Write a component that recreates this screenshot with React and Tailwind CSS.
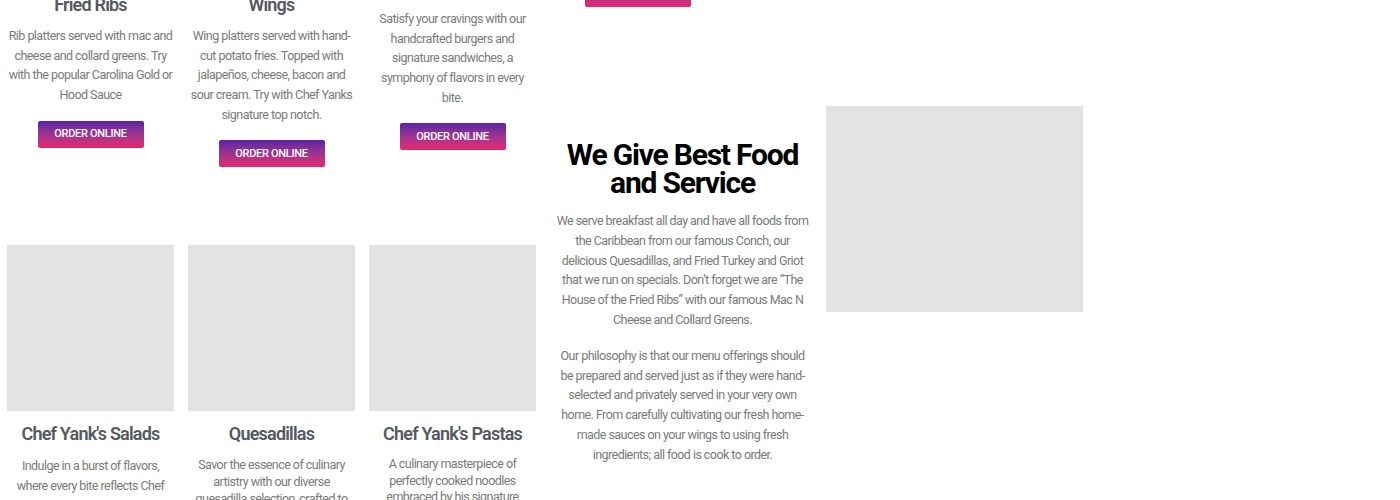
import React from 'react';

const topItems = [
  {
    title: 'Fried Ribs',
    desc: 'Rib platters served with mac and cheese and collard greens. Try with the popular Carolina Gold or Hood Sauce',
    offset: 'mt-[34px]',
    pad: '',
  },
  {
    title: 'Wings',
    desc: 'Wing platters served with hand-cut potato fries. Topped with jalapeños, cheese, bacon and sour cream. Try with Chef Yanks signature top notch.',
    offset: 'mt-[34px]',
    pad: '',
  },
  {
    title: 'Burgers',
    desc: 'Satisfy your cravings with our handcrafted burgers and signature sandwiches, a symphony of flavors in every bite.',
    offset: 'mt-[17px]',
    pad: 'px-[8px]',
  },
];

const bottomItems = [
  {
    title: "Chef Yank's Salads",
    desc: "Indulge in a burst of flavors, where every bite reflects Chef Yank's passion for fresh ingredients.",
    leading: 'leading-[20px]',
  },
  {
    title: 'Quesadillas',
    desc: 'Savor the essence of culinary artistry with our diverse quesadilla selection, crafted to perfection.',
    leading: 'leading-[17px]',
  },
  {
    title: "Chef Yank's Pastas",
    desc: 'A culinary masterpiece of perfectly cooked noodles embraced by his signature sauces.',
    leading: 'leading-[16.5px]',
  },
];

function OrderButton() {
  return (
    <a
      href="#"
      className="inline-flex items-center justify-center w-[106px] h-[27px] rounded-[2px] bg-gradient-to-b from-[#5b1fa6] to-[#e8206c] text-white text-[11px] font-medium uppercase tracking-[-0.3px]"
    >
      Order Online
    </a>
  );
}

function ImageBox({ className }) {
  return <div className={`bg-[#e3e3e3] ${className}`}></div>;
}

export default function App() {
  return (
    <div className="w-[1400px] h-[500px] overflow-hidden bg-white font-['Roboto',sans-serif]">
      <div className="flex items-start -mt-[40px]">
        {/* Menu grid */}
        <div className="w-[543px] pl-[7px] flex flex-col">
          <div className="flex items-start gap-[14px]">
            {topItems.map((item) => (
              <div key={item.title} className={`w-[167px] flex flex-col items-center text-center ${item.offset}`}>
                <h3 className="text-[18px] leading-[22px] font-semibold text-[#54595f] tracking-[-0.8px] whitespace-nowrap">{item.title}</h3>
                <p className={`mt-[10px] text-[12.5px] leading-[19.7px] text-[#7a7a7a] tracking-[-0.55px] ${item.pad}`}>{item.desc}</p>
                <div className="mt-[15px]">
                  <OrderButton />
                </div>
              </div>
            ))}
          </div>

          <div className="flex items-start gap-[14px] mt-[78px]">
            {bottomItems.map((item) => (
              <div key={item.title} className="w-[167px] flex flex-col items-center text-center">
                <ImageBox className="w-[167px] h-[166px]" />
                <h3 className="mt-[12px] text-[18px] leading-[22px] font-semibold text-[#54595f] tracking-[-0.8px]">{item.title}</h3>
                <p className={`mt-[11px] text-[12.5px] text-[#7a7a7a] tracking-[-0.55px] ${item.leading}`}>{item.desc}</p>
              </div>
            ))}
          </div>
        </div>

        {/* About */}
        <div className="w-[547px] flex flex-col">
          <div className="w-[167px] ml-[11px] mt-[20px] flex justify-center">
            <OrderButton />
          </div>

          <div className="flex items-start gap-[11px] mt-[99px] pl-[7px]">
            <div className="w-[265px] px-[4px] pt-[35px] text-center">
              <h2 className="text-[30px] leading-[28px] font-bold text-black tracking-[-1.2px]">
                We Give Best Food and Service
              </h2>
              <p className="mt-[14px] text-[12.5px] leading-[19.8px] text-[#7a7a7a] tracking-[-0.55px]">
                We serve breakfast all day and have all foods from the Caribbean from our famous Conch, our delicious Quesadillas, and Fried Turkey and Griot that we run on specials. Don’t forget we are “The House of the Fried Ribs” with our famous Mac N Cheese and Collard Greens.
              </p>
              <p className="mt-[16px] text-[12.5px] leading-[19.8px] text-[#7a7a7a] tracking-[-0.55px]">
                Our philosophy is that our menu offerings should be prepared and served just as if they were hand-selected and privately served in your very own home. From carefully cultivating our fresh home-made sauces on your wings to using fresh ingredients; all food is cook to order.
              </p>
            </div>
            <ImageBox className="w-[257px] h-[206px]" />
          </div>
        </div>
      </div>
    </div>
  );
}
